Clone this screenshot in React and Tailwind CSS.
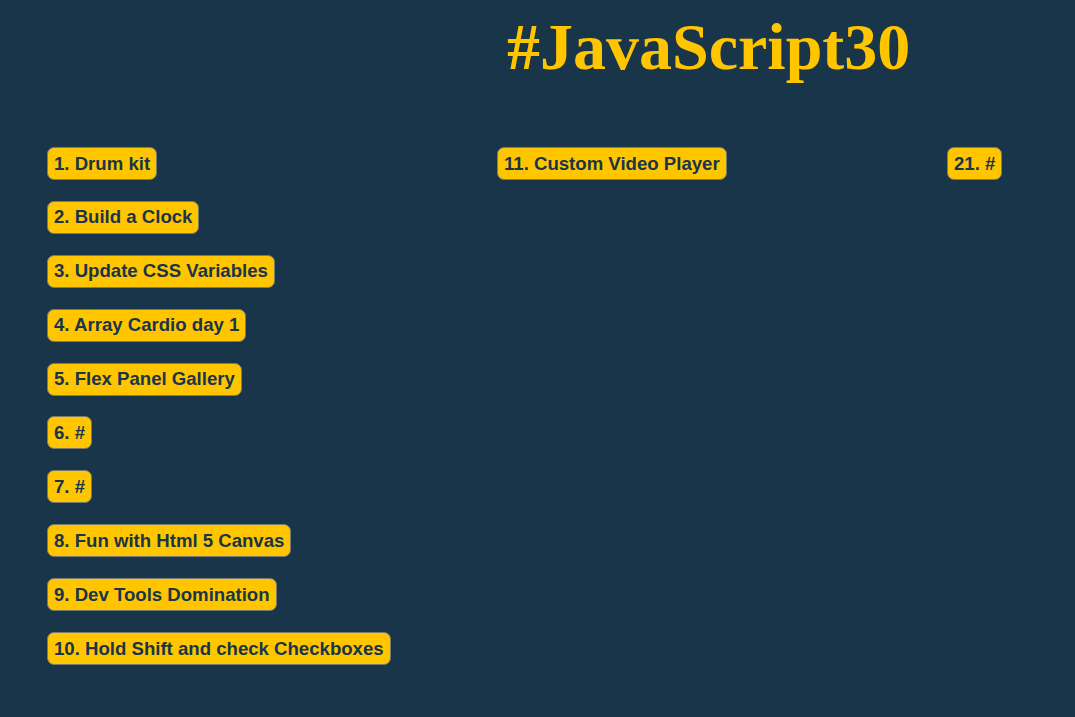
const columns = [
  [
    "1. Drum kit",
    "2. Build a Clock",
    "3. Update CSS Variables",
    "4. Array Cardio day 1",
    "5. Flex Panel Gallery",
    "6. #",
    "7. #",
    "8. Fun with Html 5 Canvas",
    "9. Dev Tools Domination",
    "10. Hold Shift and check Checkboxes",
  ],
  ["11. Custom Video Player"],
  ["21. #"],
];

function Project({ title }) {
  return (
    <a
      href="#"
      className="self-start h-[33px] px-[6px] flex items-center text-[18.6px] font-bold rounded-[7px] border border-[#7a7a6e] bg-[#ffc600] text-[#193549] whitespace-nowrap"
    >
      {title}
    </a>
  );
}

export default function App() {
  return (
    <div
      className="min-h-[717px] bg-[#193549] text-[#193549]"
      style={{ fontFamily: '"Liberation Sans", Arial, sans-serif' }}
    >
      <h1
        className="pl-[507px] pt-[9px] text-[66px] leading-[76px] font-bold text-[#ffc600]"
        style={{ fontFamily: '"Liberation Serif", "Times New Roman", serif' }}
      >
        #JavaScript30
      </h1>
      <div className="grid grid-cols-[450px_450px_auto] pl-[47px] pt-[62px]">
        {columns.map((col, i) => (
          <div key={i} className="flex flex-col gap-[20.9px]">
            {col.map((t) => (
              <Project key={t} title={t} />
            ))}
          </div>
        ))}
      </div>
    </div>
  );
}
